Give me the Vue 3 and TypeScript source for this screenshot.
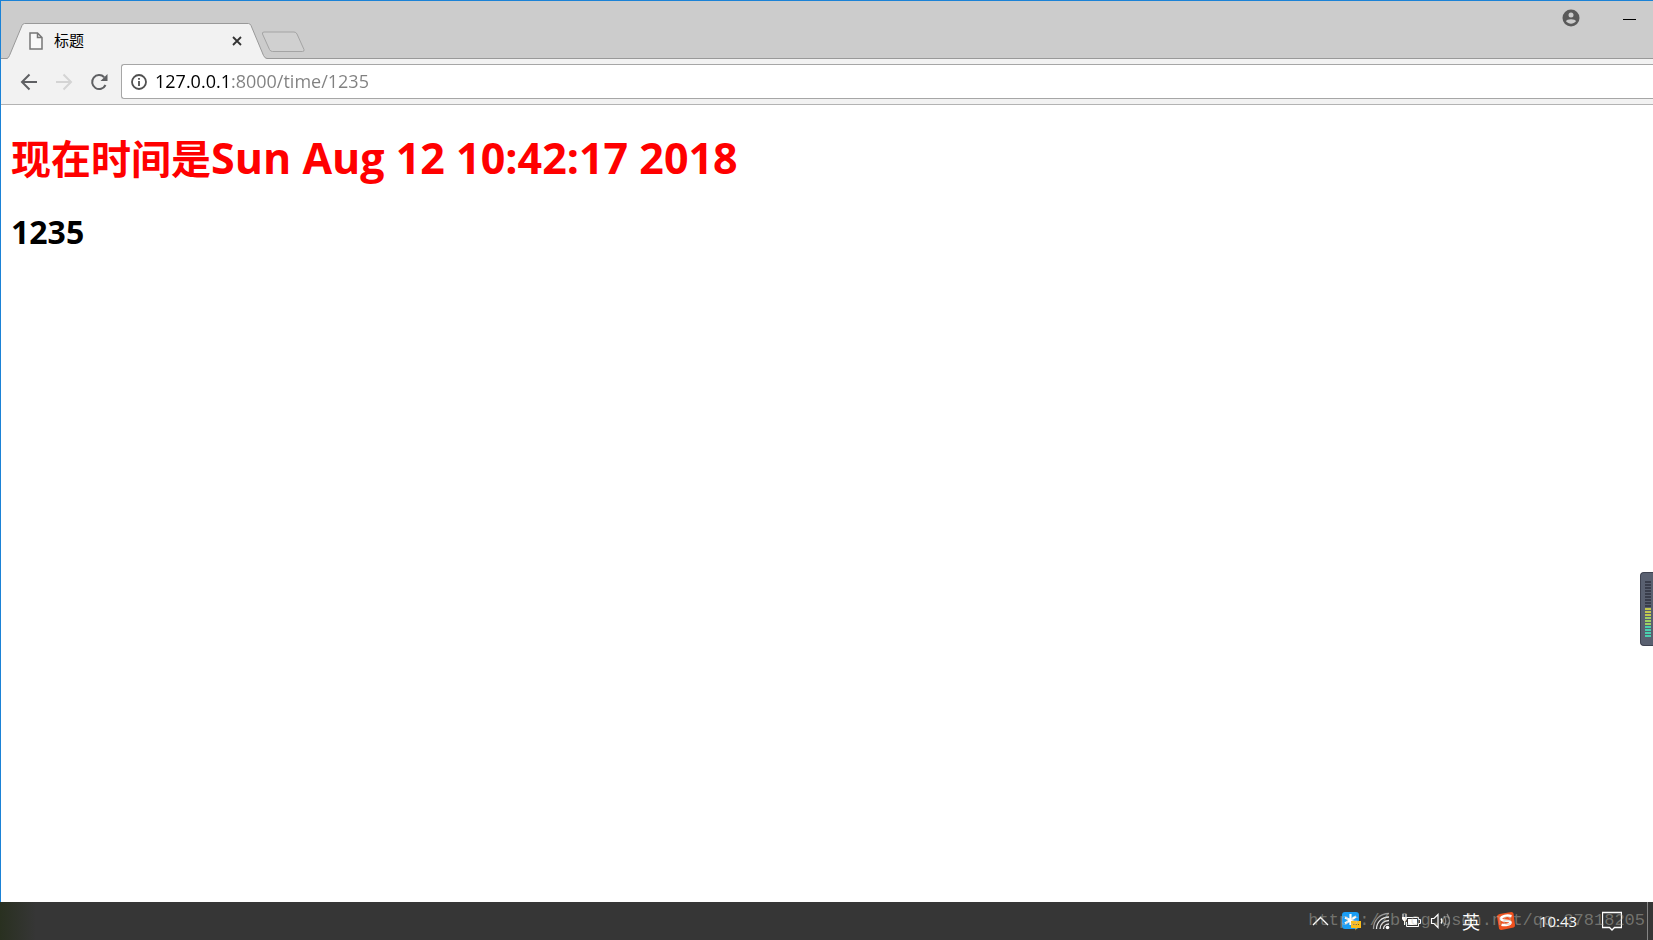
<script setup lang="ts">
import { ref } from 'vue'

const address = ref('127.0.0.1:8000/time/1235')
const label = '现在时间是'
const now = 'Sun Aug 12 10:42:17 2018'
const value = '1235'
const bars = Array.from({ length: 19 }, (_, i) => i)

function barClass(i: number): string {
  if (i < 9) return 'off'
  if (i < 12) return 'warm'
  if (i < 15) return 'lime'
  return 'cool'
}
</script>

<template>
  <div class="desktop">
    <div class="browser">
      <header class="strip">
        <div class="tab">
          <svg class="tab-shape" viewBox="0 0 260 36" preserveAspectRatio="none" aria-hidden="true">
            <path d="M0 36V35.500Q1.500 35 2.500 32.500L15 2.500Q16 .5 17.500 .5H241.500Q243 .5 244 2.500L256.500 32.500Q258 35.500 260 35.500V36Z" fill="#f2f2f2" />
            <path d="M0 35.500Q1.500 35 2.500 32.500L15 2.500Q16 .5 17.500 .5H241.500Q243 .5 244 2.500L256.500 32.500Q258 35.500 260 35.500" fill="none" stroke="#999" />
          </svg>
          <svg class="file" width="14" height="18" viewBox="0 0 14 18" aria-hidden="true">
            <path d="M1 1H8.500L13 5.500V17H1Z M8.500 1V5.500H13" fill="#fff" fill-opacity=".5" stroke="#777" stroke-width="1.500" />
          </svg>
          <span class="tab-title">标题</span>
          <button class="tab-close" type="button" aria-label="关闭标签页">
            <svg width="10" height="10" viewBox="0 0 10 10"><path d="M1 1L9 9M9 1L1 9" stroke="#333" stroke-width="1.800" /></svg>
          </button>
        </div>
        <button class="new-tab" type="button" aria-label="新标签页">
          <svg width="44" height="22" viewBox="0 0 44 22">
            <path d="M3 1H33Q35 1 36 3L43 18.500Q43.500 20.500 41.500 20.500H11.500Q9.500 20.500 8.500 18.500L1.500 3Q1 1 3 1Z" fill="#d0d0d0" stroke="#a4a4a4" />
          </svg>
        </button>
        <div class="window-buttons">
          <button type="button" aria-label="用户">
            <svg width="18" height="18" viewBox="0 0 18 18">
              <circle cx="9" cy="9" r="8.500" fill="#5a5a5a" />
              <circle cx="9" cy="6" r="2.500" fill="#ccc" />
              <path d="M4 12.200C4.200 9.500 13.800 9.500 14 12.200C11.500 15.500 6.500 15.500 4 12.200Z" fill="#ccc" />
            </svg>
          </button>
          <button type="button" aria-label="最小化">
            <svg width="13" height="18" viewBox="0 0 13 18"><path d="M0 10.500H13" stroke="#000" /></svg>
          </button>
        </div>
      </header>

      <nav class="toolbar">
        <button type="button" aria-label="后退">
          <svg width="18" height="18" viewBox="0 0 18 18"><path d="M17 9H2M9.500 1.500L2 9L9.500 16.500" fill="none" stroke="#5f6063" stroke-width="2" /></svg>
        </button>
        <button type="button" aria-label="前进" disabled>
          <svg width="18" height="18" viewBox="0 0 18 18"><path d="M1 9H16M8.500 1.500L16 9L8.500 16.500" fill="none" stroke="#d4d4d4" stroke-width="2" /></svg>
        </button>
        <button type="button" aria-label="重新加载">
          <svg width="18" height="18" viewBox="0 0 18 18">
            <path d="M15.500 12A7 7 0 1 1 14.200 4.200" fill="none" stroke="#5f6063" stroke-width="2" />
            <path d="M17.500 1V8H10.500Z" fill="#5f6063" />
          </svg>
        </button>
        <div class="omnibox">
          <svg width="16" height="16" viewBox="0 0 16 16" aria-hidden="true">
            <circle cx="8" cy="8" r="7" fill="none" stroke="#505050" stroke-width="1.800" />
            <path d="M8 7V12M8 4V5.800" stroke="#505050" stroke-width="1.800" />
          </svg>
          <input v-model="address" type="text" aria-label="地址" spellcheck="false" />
        </div>
      </nav>

      <main class="page">
        <h1>{{ label }}<span class="latin">{{ now }}</span></h1>
        <h2>{{ value }}</h2>
      </main>
    </div>

    <div class="meter" aria-hidden="true">
      <i v-for="i in bars" :key="i" :class="barClass(i)"></i>
    </div>

    <footer class="taskbar">
      <button class="slot" type="button" aria-label="显示隐藏的图标">
        <svg width="18" height="18" viewBox="0 0 18 18"><path d="M1 13L8.500 5.500L16 13" fill="none" stroke="#fff" stroke-width="1.400" /></svg>
      </button>
      <button class="slot" type="button" aria-label="消息">
        <svg width="20" height="20" viewBox="0 0 20 20">
          <rect x="1" y="1" width="17" height="17" rx="3" fill="#1a9df4" />
          <path d="M9.500 3V14M4 6.500L15 12M15 5.500L4 12.500" stroke="#fff" stroke-width="2.200" />
          <path d="M10 10H20V17H16L14.500 19.500V17H10Z" fill="#fbbd1a" />
          <path d="M12 13.500H18" stroke="#86600d" stroke-dasharray="1.500 1" />
        </svg>
      </button>
      <button class="slot" type="button" aria-label="网络">
        <svg width="18" height="18" viewBox="0 0 18 18">
          <g fill="none" stroke="#e8e8e8" stroke-width="1.300">
            <path d="M1.500 17C1.500 8 8 1.500 17 1.500" stroke="#999" />
            <path d="M4.500 17C4.500 10 10 5 17 5" /><path d="M8 17C8 12 12 8.500 17 8.500" /><path d="M11.500 17C11.500 14 14 12 17 12" />
          </g>
          <circle cx="15.500" cy="15.500" r="1.800" fill="#fff" />
        </svg>
      </button>
      <button class="slot" type="button" aria-label="电池">
        <svg width="20" height="18" viewBox="0 0 20 18">
          <path d="M5.500 5.500H17.500V7.500H19.500V11.500H17.500V14.500H5.500V10" fill="none" stroke="#fff" />
          <path d="M7 7H16V13H7Z" fill="#fff" />
          <path d="M1 5H6V7L4.500 9H2.500L1 7ZM1.500 2H2.500V5H1.500ZM4.500 2H5.500V5H4.500ZM3 9H4V13H3Z" fill="#fff" />
        </svg>
      </button>
      <button class="slot" type="button" aria-label="音量">
        <svg width="22" height="18" viewBox="0 0 22 18">
          <path d="M1.500 6.500H4L8 2.500V15.500L4 11.500H1.500Z" fill="none" stroke="#fff" stroke-width="1.200" />
          <path d="M11 6.500Q13 9 11 11.500" fill="none" stroke="#fff" stroke-width="1.300" />
          <path d="M14 4Q17.500 9 14 14M17 2Q22 9 17 16" fill="none" stroke="#888" stroke-width="1.300" />
        </svg>
      </button>
      <button class="slot ime" type="button">英</button>
      <button class="slot wide" type="button" aria-label="输入法">
        <svg width="20" height="20" viewBox="0 0 20 20">
          <path d="M3.500 3L15.500 1Q17 1 17.500 2.500L19 14Q19 16 17.500 16.500L5.500 19Q3.500 19 3 17.500L1 5.500Q1 3.500 3.500 3Z" fill="#f0521f" />
          <path d="M15.500 5.200C11 4 5 5 5 7.800C5 11 14.500 8.500 14.500 11.500C14.500 14 9 14.500 5.500 13.700" fill="none" stroke="#fff" stroke-width="2.600" />
        </svg>
      </button>
      <time class="clock">10:43</time>
      <button class="slot note" type="button" aria-label="通知">
        <svg width="20" height="20" viewBox="0 0 20 20"><path d="M.5 1.500H19.500V16.500H12.500L10 19L7.500 16.500H.5Z" fill="none" stroke="#fff" stroke-width="1.300" /></svg>
      </button>
      <button class="show-desktop" type="button" aria-label="显示桌面"></button>
      <span class="watermark">https://blog.csdn.net/qq_37818205</span>
    </footer>
  </div>
</template>

<style>
body {
  margin: 0;
}
</style>

<style scoped>
.desktop {
  position: relative;
  display: flex;
  flex-direction: column;
  min-height: 100vh;
  background: #fff;
  font-family: "Open Sans", "Noto Sans CJK SC", sans-serif;
}
button {
  display: flex;
  align-items: center;
  justify-content: center;
  padding: 0;
  border: 0;
  background: none;
  font: inherit;
}
svg {
  display: block;
  flex: none;
}
.browser {
  flex: 1;
  border: 1px solid #1b82d6;
  border-width: 1px 0 0 1px;
}
.strip {
  display: flex;
  align-items: flex-end;
  height: 58px;
  padding-left: 6px;
  background: linear-gradient(#999, #999) bottom / 100% 1px no-repeat #ccc;
}
.tab {
  position: relative;
  display: flex;
  align-items: center;
  box-sizing: border-box;
  width: 260px;
  height: 36px;
  padding: 0 25px 0 22px;
}
.tab-shape {
  position: absolute;
  inset: 0;
  width: 100%;
  height: 100%;
}
.file,
.tab-title,
.tab-close {
  position: relative;
}
.tab-title {
  flex: 1;
  margin-left: 11px;
  padding-bottom: 2px;
  font-family: "Noto Sans CJK SC", sans-serif;
  font-size: 15px;
  line-height: 20px;
}
.new-tab {
  height: 28px;
  align-items: flex-start;
  margin-left: -6px;
}
.window-buttons {
  display: flex;
  align-self: flex-start;
  gap: 43px;
  margin-left: auto;
  padding: 8px 17px 0 0;
}
.toolbar {
  display: flex;
  align-items: center;
  gap: 17px;
  height: 45px;
  padding-left: 19px;
  border-bottom: 1px solid #b3b3b3;
  background: #f2f2f2;
}
.omnibox {
  display: flex;
  flex: 1;
  align-items: center;
  gap: 8px;
  height: 33px;
  margin-left: -4px;
  padding-left: 9px;
  border: 1px solid #a6a6a6;
  border-right: 0;
  border-radius: 3px 0 0 3px;
  background: #fff;
}
.omnibox input {
  flex: 1;
  min-width: 0;
  height: 30px;
  padding: 0 0 2px;
  border: 0;
  outline: 0;
  background: linear-gradient(90deg, #000 73px, #808080 73px);
  -webkit-background-clip: text;
  background-clip: text;
  color: transparent;
  caret-color: #000;
  font: 18px/28px "Open Sans", sans-serif;
}
.page {
  padding: 27px 10px;
}
h1,
h2 {
  margin: 0;
  font-weight: 700;
}
h1 {
  color: #f00;
  font-size: 40px;
  line-height: 54px;
}
.latin {
  font-size: 43px;
  line-height: 40px;
}
h2 {
  margin-top: 26px;
  color: #000;
  font-size: 32px;
  line-height: 40px;
}
.meter {
  position: absolute;
  top: 572px;
  right: 0;
  box-sizing: border-box;
  width: 13px;
  height: 74px;
  padding: 8px 2px 0 4px;
  border: 1px solid #3e4250;
  border-right: 0;
  border-radius: 4px 0 0 4px;
  background: #596070;
}
.meter i {
  display: block;
  height: 2px;
  margin-bottom: 1px;
}
.off {
  background: #393d4b;
}
.warm {
  background: #c3c84e;
}
.lime {
  background: #9ed063;
}
.cool {
  background: #49d0ae;
}
.taskbar {
  position: relative;
  display: flex;
  align-items: center;
  justify-content: flex-end;
  height: 38px;
  background: linear-gradient(90deg, #293020, #363636 36px, #363636);
  color: #fff;
}
.slot {
  width: 30px;
  height: 38px;
}
.ime {
  color: #fff;
  font-family: "Noto Sans CJK SC", sans-serif;
  font-size: 18px;
}
.wide {
  width: 40px;
}
.clock {
  width: 64px;
  font-size: 15px;
  line-height: 38px;
  text-align: center;
}
.note {
  width: 43px;
}
.show-desktop {
  width: 6px;
  height: 38px;
  margin-left: 14px;
  border-left: 1px solid #858585;
}
.watermark {
  position: absolute;
  right: 8px;
  bottom: 7px;
  color: rgba(190, 190, 180, 0.45);
  font: 17px/24px "Liberation Mono", monospace;
  pointer-events: none;
}
</style>
